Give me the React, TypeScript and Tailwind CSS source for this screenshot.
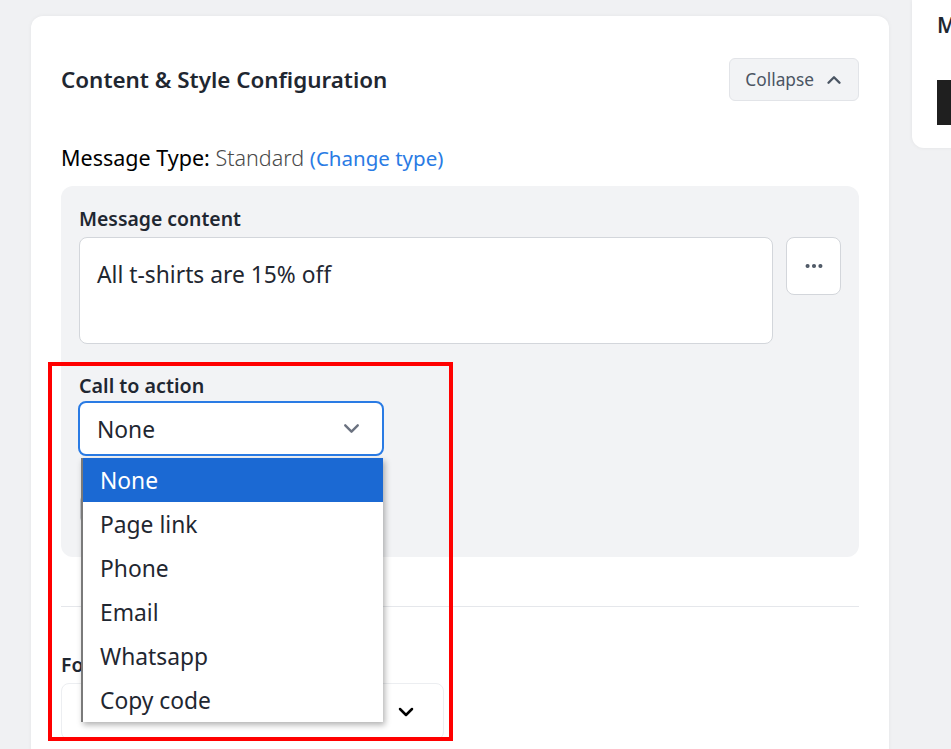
import { ChevronDown, ChevronUp, Ellipsis } from "lucide-react";

const ctaOptions = ["None", "Page link", "Phone", "Email", "Whatsapp", "Copy code"];

export default function App() {
  return (
    <div className="h-screen w-full overflow-hidden bg-[#f0f1f3] font-['Noto_Sans',sans-serif] text-[#1f2731]">
      <div className="flex items-start gap-[23px] pl-[31px]">
        {/* main card */}
        <div className="relative mt-[16px] h-[800px] w-[858px] shrink-0 rounded-xl bg-white px-[30px] pt-[42px] shadow-[0_0_4px_rgba(0,0,0,0.05)]">
          <div className="flex items-center justify-between">
            <h2 className="text-[22.4px] font-semibold leading-[30px]">Content &amp; Style Configuration</h2>
            <button className="flex h-[43px] items-center gap-[9px] rounded-md border border-[#e2e4e8] bg-[#f2f3f5] pl-[15px] pr-[13px] text-[17.3px] text-[#4b5563]">
              Collapse
              <ChevronUp size={22} strokeWidth={2.6} />
            </button>
          </div>

          <p className="mt-[43px] text-[21.5px] leading-[28px] text-black">
            Message Type: <span className="font-light text-[#4a4a4a]">Standard</span>{" "}
            <span className="text-[20.5px] text-[#2a7be4]">(Change type)</span>
          </p>

          <div className="mt-[14px] rounded-xl bg-[#f2f3f5] px-[18px] pb-[35px] pt-[20px]">
            <label className="block text-[19.4px] font-semibold leading-[26px]">Message content</label>
            <div className="mt-[5px] flex items-start gap-[13px]">
              <div className="h-[107px] flex-1 rounded-lg border border-[#d3d6db] bg-white px-[17px] pt-[22px] text-[22.8px] leading-[30px]">
                All t-shirts are 15% off
              </div>
              <button className="flex h-[58px] w-[55px] items-center justify-center rounded-lg border border-[#d3d6db] bg-white text-[#4b5563]">
                <Ellipsis size={22} strokeWidth={2.5} />
              </button>
            </div>

            <label className="mt-[29px] block text-[19.7px] font-semibold leading-[26px]">Call to action</label>
            <div className="relative -ml-px mt-[2px] w-[306px]">
              <div className="flex h-[55px] items-center justify-between rounded-lg border-2 border-[#2a7be4] bg-white pb-[0px] pl-[17px] pr-[18px] pt-[4px] text-[22.8px]">
                None
                <ChevronDown size={25} strokeWidth={2.3} className="-mt-[4px] text-[#6b7280]" />
              </div>
              {/* open list */}
              <ul className="absolute left-[3px] top-full z-20 mt-[2px] w-[302px] border-l-2 border-[#7a7a7a] bg-white text-[22.8px] shadow-[2px_3px_6px_rgba(0,0,0,0.3)]">
                {ctaOptions.map((opt, i) => (
                  <li
                    key={opt}
                    className={
                      i === 0
                        ? "flex h-[44px] items-center bg-[#1b69d3] pl-[17px] pt-[3px] text-white"
                        : "flex h-[44px] items-center pl-[17px] pt-[3px] text-[#1f2731]"
                    }
                  >
                    {opt}
                  </li>
                ))}
              </ul>
            </div>
            <div className="ml-[1px] mt-[40px] h-[26px] w-[200px] rounded-sm border border-[#c4c7cc] bg-white"></div>
          </div>

          <div className="mt-[49px] border-t border-[#e5e7eb]"></div>

          <label className="mt-[45px] block text-[19.4px] font-semibold leading-[26px]">Font</label>
          <div className="mt-[5px] flex h-[57px] w-[383px] items-center justify-end rounded-lg border border-[#eceef1] bg-white pr-[25px]">
            <ChevronDown size={24} strokeWidth={2.5} className="text-black" />
          </div>

          {/* annotation frame */}
          <div className="pointer-events-none absolute left-[17px] top-[346px] z-30 h-[379px] w-[405px] border-4 border-[#ff0000]"></div>
        </div>

        {/* side card */}
        <div className="h-[148px] w-[300px] shrink-0 rounded-b-xl bg-white pl-[25px] pt-[10px] shadow-[0_0_4px_rgba(0,0,0,0.06)]">
          <h3 className="text-[21px] font-semibold leading-[30px]">Message preview</h3>
          <div className="mt-[40px] h-[45px] w-[200px] bg-[#1f1f1f]"></div>
        </div>
      </div>
    </div>
  );
}
